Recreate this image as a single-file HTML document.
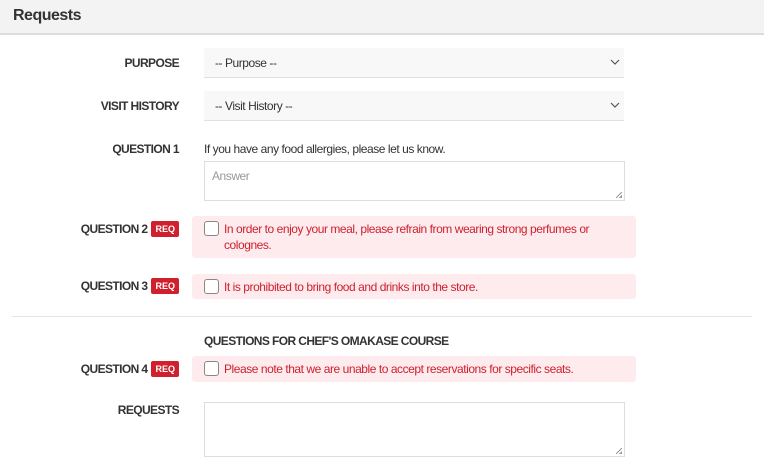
<!DOCTYPE html>
<html><head><style>
*{box-sizing:border-box;margin:0;padding:0}
body{width:770px;height:465px;overflow:hidden;background:#fff;font-family:"Liberation Sans",sans-serif;font-size:12px;color:#333;position:relative;letter-spacing:-0.45px}
.hdr{position:absolute;left:0;top:0;width:764px;height:35px;background:#f3f3f3;border-bottom:2px solid #ddd}
.hdr span{position:absolute;left:13px;top:7px;font-size:16px;font-weight:bold;color:#333;letter-spacing:-0.5px}
.lbl{position:absolute;right:591px;font-weight:bold;font-size:12px;color:#333;white-space:nowrap;display:flex;align-items:center;letter-spacing:-0.6px}
.req{display:inline-block;background:#d0202e;color:#fff;font-size:9px;font-weight:bold;padding:2px 4px;border-radius:2px;margin-left:4px;line-height:12px;letter-spacing:0}
.sel{position:absolute;left:204px;width:420px;height:30px;background:#f8f8f8;border-bottom:1px solid #e0e0e0;padding:8px 11px;color:#333}
.sel svg{position:absolute;right:4px;top:11px}
.ta{position:absolute;left:204px;width:421px;border:1px solid #ddd;background:#fff;padding:7px;color:#999}
.ta:after{content:"";position:absolute;right:2px;bottom:2px;width:6px;height:6px;background:linear-gradient(135deg,transparent 45%,#999 45%,#999 55%,transparent 55%,transparent 75%,#999 75%)}
.box{position:absolute;left:192px;width:444px;background:#fdebee;border-radius:3px;color:#d0202e;padding:5px 10px 5px 32px;line-height:16px}
.box i{position:absolute;left:12px;top:5px;width:15px;height:15px;border:1px solid #888;border-radius:3px;background:#fff}
.txt{position:absolute;left:204px}
</style></head><body>
<div class="hdr"><span>Requests</span></div>

<div class="lbl" style="top:56px">PURPOSE</div>
<div class="sel" style="top:48px">-- Purpose --<svg width="10" height="6" viewBox="0 0 10 6"><path d="M1 1l4 4 4-4" fill="none" stroke="#555" stroke-width="1.2"/></svg></div>

<div class="lbl" style="top:99px">VISIT HISTORY</div>
<div class="sel" style="top:91px">-- Visit History --<svg width="10" height="6" viewBox="0 0 10 6"><path d="M1 1l4 4 4-4" fill="none" stroke="#555" stroke-width="1.2"/></svg></div>

<div class="lbl" style="top:142px">QUESTION 1</div>
<div class="txt" style="top:142px">If you have any food allergies, please let us know.</div>
<div class="ta" style="top:161px;height:40px">Answer</div>

<div class="lbl" style="top:221px">QUESTION 2<span class="req">REQ</span></div>
<div class="box" style="top:216px;height:42px"><i></i>In order to enjoy your meal, please refrain from wearing strong perfumes or colognes.</div>

<div class="lbl" style="top:278px">QUESTION 3<span class="req">REQ</span></div>
<div class="box" style="top:274px;height:25px"><i></i>It is prohibited to bring food and drinks into the store.</div>

<div style="position:absolute;left:12px;top:316px;width:740px;height:1px;background:#e5e5e5"></div>
<div class="txt" style="top:334px;font-weight:bold;letter-spacing:-0.6px">QUESTIONS FOR CHEF'S OMAKASE COURSE</div>

<div class="lbl" style="top:361px">QUESTION 4<span class="req">REQ</span></div>
<div class="box" style="top:356px;height:26px"><i></i>Please note that we are unable to accept reservations for specific seats.</div>

<div class="lbl" style="top:403px">REQUESTS</div>
<div class="ta" style="top:402px;height:55px"></div>
</body></html>
